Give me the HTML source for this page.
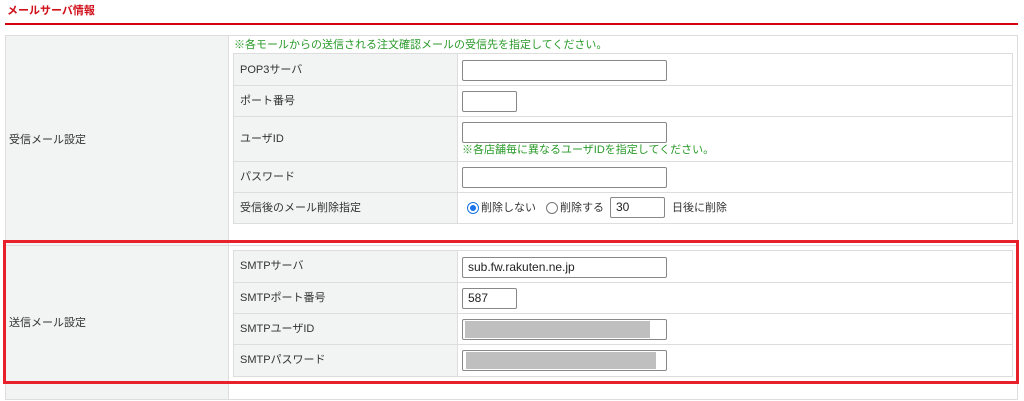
<!DOCTYPE html>
<html><head><meta charset="utf-8"><style>
*{margin:0;padding:0;box-sizing:border-box}
body{width:1024px;height:401px;background:#fff;position:relative;overflow:hidden;font-family:"Liberation Sans","Noto Sans CJK JP",sans-serif;font-size:11px;color:#333}
.a{position:absolute}
.t{position:absolute;white-space:nowrap;line-height:14px}
.g{background:#f2f3f3}
.inp{position:absolute;height:21px;border:1px solid #888;border-radius:2px;background:#fff;font-size:12px;line-height:19px;padding-left:5px;color:#222}
.hl{position:absolute;height:1px;background:#ddd}
.vl{position:absolute;width:1px;background:#ddd}
.grn{color:#2a9a2a}
</style></head><body>
<div class="t" style="left:7px;top:4px;color:#d0101a;font-weight:bold;font-size:11px">メールサーバ情報</div>
<div class="a" style="left:5px;top:23px;width:1013px;height:2px;background:#d7000f"></div>

<!-- outer table -->
<div class="a g" style="left:5px;top:35px;width:224px;height:365px;border:1px solid #ddd;border-right:none"></div>
<div class="a" style="left:228px;top:35px;width:790px;height:365px;border:1px solid #ddd"></div>
<div class="hl" style="left:5px;top:245px;width:1013px"></div>

<div class="t grn" style="left:234px;top:38px">※各モールからの送信される注文確認メールの受信先を指定してください。</div>

<!-- inner table 1 -->
<div class="a" style="left:233px;top:53px;width:780px;height:171px;border:1px solid #ddd"></div>
<div class="a g" style="left:234px;top:54px;width:224px;height:169px"></div>
<div class="vl" style="left:457px;top:54px;height:169px"></div>
<div class="hl" style="left:234px;top:85px;width:778px"></div>
<div class="hl" style="left:234px;top:116px;width:778px"></div>
<div class="hl" style="left:234px;top:161px;width:778px"></div>
<div class="hl" style="left:234px;top:192px;width:778px"></div>

<div class="t" style="left:240px;top:63px">POP3サーバ</div>
<div class="t" style="left:240px;top:94px">ポート番号</div>
<div class="t" style="left:240px;top:132px">ユーザID</div>
<div class="t" style="left:240px;top:170px">パスワード</div>
<div class="t" style="left:240px;top:201px">受信後のメール削除指定</div>

<div class="inp" style="left:462px;top:60px;width:205px"></div>
<div class="inp" style="left:462px;top:91px;width:55px"></div>
<div class="inp" style="left:462px;top:122px;width:205px"></div>
<div class="t grn" style="left:462px;top:143px">※各店舗毎に異なるユーザIDを指定してください。</div>
<div class="inp" style="left:462px;top:167px;width:205px"></div>

<div class="a" style="left:467px;top:202px;width:12px;height:12px;border-radius:50%;border:1px solid #1a73e8;background:#fff"><div class="a" style="left:2px;top:2px;width:6px;height:6px;border-radius:50%;background:#1a73e8"></div></div>
<div class="t" style="left:481px;top:201px">削除しない</div>
<div class="a" style="left:546px;top:202px;width:12px;height:12px;border-radius:50%;border:1px solid #777;background:#fff"></div>
<div class="t" style="left:560px;top:201px">削除する</div>
<div class="inp" style="left:610px;top:197px;width:55px">30</div>
<div class="t" style="left:672px;top:201px">日後に削除</div>

<div class="t" style="left:9px;top:133px">受信メール設定</div>

<!-- inner table 2 -->
<div class="a" style="left:233px;top:250px;width:780px;height:127px;border:1px solid #ddd"></div>
<div class="a g" style="left:234px;top:251px;width:224px;height:125px"></div>
<div class="vl" style="left:457px;top:251px;height:125px"></div>
<div class="hl" style="left:234px;top:282px;width:778px"></div>
<div class="hl" style="left:234px;top:313px;width:778px"></div>
<div class="hl" style="left:234px;top:344px;width:778px"></div>

<div class="t" style="left:240px;top:259px">SMTPサーバ</div>
<div class="t" style="left:240px;top:291px">SMTPポート番号</div>
<div class="t" style="left:240px;top:322px">SMTPユーザID</div>
<div class="t" style="left:240px;top:353px">SMTPパスワード</div>

<div class="inp" style="left:462px;top:257px;width:205px">sub.fw.rakuten.ne.jp</div>
<div class="inp" style="left:462px;top:288px;width:55px">587</div>
<div class="inp" style="left:462px;top:319px;width:205px;padding:0"><div class="a" style="left:2px;top:1px;width:185px;height:17px;background:#bfbfbf"></div></div>
<div class="inp" style="left:462px;top:350px;width:205px;padding:0"><div class="a" style="left:3px;top:1px;width:190px;height:17px;background:#bfbfbf"></div></div>

<div class="t" style="left:9px;top:316px">送信メール設定</div>

<!-- red highlight -->
<div class="a" style="left:3px;top:240px;width:1016px;height:144px;border:3px solid #e8202a"></div>
</body></html>
